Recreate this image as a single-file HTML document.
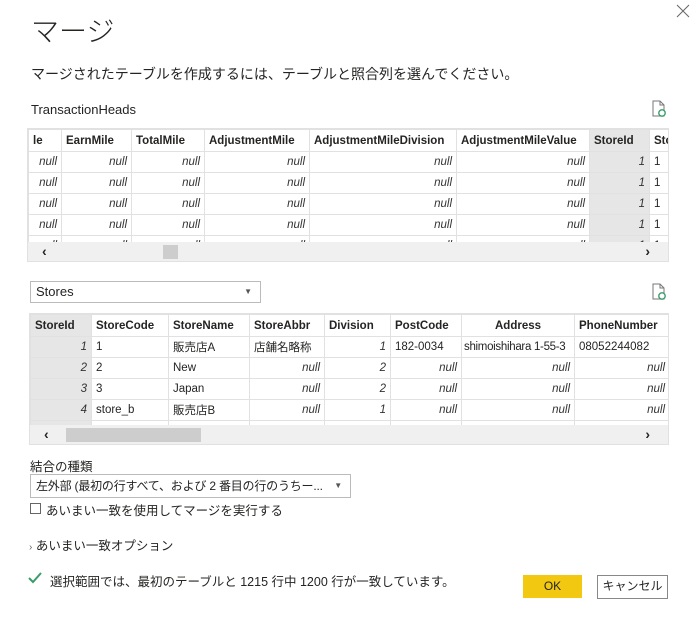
<!DOCTYPE html>
<html><head><meta charset="utf-8"><style>
*{box-sizing:border-box;margin:0;padding:0}
body{width:698px;height:628px;background:#fff;position:relative;overflow:hidden;font-family:"Liberation Sans","Noto Sans CJK JP",sans-serif;color:#252423}
.a{position:absolute}
.grid{position:absolute;border:1px solid #e1e1e1;overflow:hidden;background:#fff}
table{border-collapse:collapse;table-layout:fixed;font-size:11.5px}
td,th{border:1px solid #e1e1e1;height:21px;padding:0 4px;white-space:nowrap;overflow:hidden}
th{font-weight:bold;text-align:left;color:#252423;height:22px;background:#fff}
td.n{font-style:italic;text-align:right;color:#333}
td.g,th.g{background:#e6e6e6}
.sb{position:absolute;left:0;right:0;bottom:0;height:19px;background:#f0f0f0}
.btn{position:absolute;font-size:12px;text-align:center;line-height:22px}
</style></head><body>
<div class="a" style="left:31px;top:10px;font-size:28px;font-weight:300">マージ</div>
<svg class="a" style="left:676px;top:4px" width="14" height="14"><path d="M1 1l12 12M13 1L1 13" stroke="#666" stroke-width="1"/></svg>
<div class="a" style="left:31px;top:64px;font-size:14px">マージされたテーブルを作成するには、テーブルと照合列を選んでください。</div>
<div class="a" style="left:31px;top:102px;font-size:13px">TransactionHeads</div>
<svg class="a" style="left:651px;top:100px" width="16" height="18"><path d="M2 1h7l4 4v11H2z M9 1v4h4" fill="none" stroke="#777"/><circle cx="11" cy="13" r="3.2" fill="#fff" stroke="#3a9c6a" stroke-width="1.4"/></svg>

<div class="grid" style="left:27px;top:128px;width:642px;height:134px">
<table style="width:680px;margin-left:0">
<colgroup><col style="width:33px"><col style="width:70px"><col style="width:73px"><col style="width:105px"><col style="width:147px"><col style="width:133px"><col style="width:60px"><col style="width:59px"></colgroup>
<tr><th>le</th><th>EarnMile</th><th>TotalMile</th><th>AdjustmentMile</th><th>AdjustmentMileDivision</th><th>AdjustmentMileValue</th><th class="g">StoreId</th><th>Sto</th></tr>
<tr><td class="n">null</td><td class="n">null</td><td class="n">null</td><td class="n">null</td><td class="n">null</td><td class="n">null</td><td class="n g">1</td><td>1</td></tr>
<tr><td class="n">null</td><td class="n">null</td><td class="n">null</td><td class="n">null</td><td class="n">null</td><td class="n">null</td><td class="n g">1</td><td>1</td></tr>
<tr><td class="n">null</td><td class="n">null</td><td class="n">null</td><td class="n">null</td><td class="n">null</td><td class="n">null</td><td class="n g">1</td><td>1</td></tr>
<tr><td class="n">null</td><td class="n">null</td><td class="n">null</td><td class="n">null</td><td class="n">null</td><td class="n">null</td><td class="n g">1</td><td>1</td></tr>
<tr><td class="n">null</td><td class="n">null</td><td class="n">null</td><td class="n">null</td><td class="n">null</td><td class="n">null</td><td class="n g">1</td><td>1</td></tr>
</table>
<div class="sb"><span class="a" style="left:14px;top:1px;font-size:14px;font-weight:bold">‹</span><div class="a" style="left:135px;top:3px;width:15px;height:14px;background:#cdcdcd"></div><span class="a" style="right:18px;top:1px;font-size:14px;font-weight:bold">›</span></div>
</div>

<div class="a" style="left:30px;top:281px;width:231px;height:22px;border:1px solid #bbb;font-size:13px;line-height:20px;padding-left:5px">Stores<span class="a" style="right:8px;top:0;font-size:8px;color:#555">▼</span></div>
<svg class="a" style="left:651px;top:283px" width="16" height="18"><path d="M2 1h7l4 4v11H2z M9 1v4h4" fill="none" stroke="#777"/><circle cx="11" cy="13" r="3.2" fill="#fff" stroke="#3a9c6a" stroke-width="1.4"/></svg>

<div class="grid" style="left:29px;top:313px;width:640px;height:132px">
<table style="width:639px">
<colgroup><col style="width:61px"><col style="width:77px"><col style="width:81px"><col style="width:75px"><col style="width:66px"><col style="width:71px"><col style="width:113px"><col style="width:95px"></colgroup>
<tr><th class="g">StoreId</th><th>StoreCode</th><th>StoreName</th><th>StoreAbbr</th><th>Division</th><th>PostCode</th><th style="text-align:center">Address</th><th>PhoneNumber</th></tr>
<tr><td class="n g">1</td><td>1</td><td>販売店A</td><td>店舗名略称</td><td class="n">1</td><td>182-0034</td><td style="padding:0 2px;letter-spacing:-0.3px">shimoishihara 1-55-3</td><td>08052244082</td></tr>
<tr><td class="n g">2</td><td>2</td><td>New</td><td class="n">null</td><td class="n">2</td><td class="n">null</td><td class="n">null</td><td class="n">null</td></tr>
<tr><td class="n g">3</td><td>3</td><td>Japan</td><td class="n">null</td><td class="n">2</td><td class="n">null</td><td class="n">null</td><td class="n">null</td></tr>
<tr><td class="n g">4</td><td>store_b</td><td>販売店B</td><td class="n">null</td><td class="n">1</td><td class="n">null</td><td class="n">null</td><td class="n">null</td></tr>
<tr><td class="n g">5</td><td>store</td><td>販売店C</td><td class="n">null</td><td class="n">1</td><td class="n">null</td><td class="n">null</td><td class="n">null</td></tr>
</table>
<div class="sb"><span class="a" style="left:14px;top:1px;font-size:14px;font-weight:bold">‹</span><div class="a" style="left:36px;top:3px;width:135px;height:14px;background:#cdcdcd"></div><span class="a" style="right:18px;top:1px;font-size:14px;font-weight:bold">›</span></div>
</div>

<div class="a" style="left:30px;top:456px;font-size:12.5px">結合の種類</div>
<div class="a" style="left:30px;top:474px;width:321px;height:24px;border:1px solid #bbb;font-size:12px;line-height:22px;padding-left:5px;letter-spacing:-0.2px">左外部 (最初の行すべて、および 2 番目の行のうちー...<span class="a" style="right:8px;top:0;font-size:8px;color:#555">▼</span></div>
<div class="a" style="left:30px;top:503px;width:11px;height:11px;border:1px solid #666"></div>
<div class="a" style="left:46px;top:500px;font-size:12.5px">あいまい一致を使用してマージを実行する</div>
<div class="a" style="left:29px;top:535px;font-size:12.5px"><span style="font-size:10px;color:#666">›</span> あいまい一致オプション</div>
<svg class="a" style="left:28px;top:572px" width="14" height="12"><path d="M1 6l4 4 8-9" fill="none" stroke="#3a9c6a" stroke-width="2"/></svg>
<div class="a" style="left:50px;top:571px;font-size:12.5px">選択範囲では、最初のテーブルと 1215 行中 1200 行が一致しています。</div>
<div class="btn" style="left:523px;top:575px;width:59px;height:23px;background:#f2c811">OK</div>
<div class="btn" style="left:597px;top:575px;width:71px;height:24px;border:1px solid #888;line-height:21px">キャンセル</div>
</body></html>
